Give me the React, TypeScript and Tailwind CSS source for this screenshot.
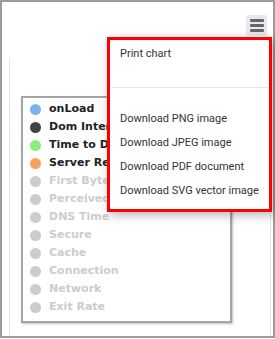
import React from 'react';

const series = [
  { name: 'onLoad', color: 'bg-[#7cb5ec]', on: true },
  { name: 'Dom Interactive', color: 'bg-[#434348]', on: true },
  { name: 'Time to DOM', color: 'bg-[#90ed7d]', on: true },
  { name: 'Server Response', color: 'bg-[#f7a35c]', on: true },
  { name: 'First Byte', color: 'bg-[#cccccc]', on: false },
  { name: 'Perceived', color: 'bg-[#cccccc]', on: false },
  { name: 'DNS Time', color: 'bg-[#cccccc]', on: false },
  { name: 'Secure', color: 'bg-[#cccccc]', on: false },
  { name: 'Cache', color: 'bg-[#cccccc]', on: false },
  { name: 'Connection', color: 'bg-[#cccccc]', on: false },
  { name: 'Network', color: 'bg-[#cccccc]', on: false },
  { name: 'Exit Rate', color: 'bg-[#cccccc]', on: false },
];

const exportItems = ['Download PNG image', 'Download JPEG image', 'Download PDF document', 'Download SVG vector image'];

export default function App() {
  return (
    <div className="relative w-[275px] h-[339px] bg-white overflow-hidden">
      {/* Chart frame */}
      <div className="h-[338px] border-2 border-[#9b9b9b] pt-[56px] pl-[7px] pr-[2px]">
        <div className="h-full border-x border-[#e3e3e3] pt-[38px] pl-[11px]">
          {/* Legend */}
          <div className="w-[211px] h-[227px] border-2 border-[#a5a5a5] shadow-[1px_1px_2px_rgba(0,0,0,0.25)] pt-[2px] pl-[7px] overflow-hidden">
            {series.map((s) => (
              <div key={s.name} className="flex items-center h-[18px] gap-[8px] whitespace-nowrap">
                <span className={`w-[11px] h-[11px] rounded-full shrink-0 ${s.color}`} />
                <span
                  className={`text-[11px] font-bold ${s.on ? 'text-[#222222]' : 'text-[#cccccc]'}`}
                  style={{ fontFamily: '"DejaVu Sans", Verdana, sans-serif' }}
                >
                  {s.name}
                </span>
              </div>
            ))}
          </div>
        </div>
      </div>

      {/* Context button */}
      <div className="absolute left-[246px] top-[15px] w-[21px] h-[21px] bg-[#e6e9f2] rounded-[2px] flex flex-col items-center justify-center gap-[2.5px]">
        <span className="w-[14px] h-[2.5px] bg-[#666666] rounded-[1px]" />
        <span className="w-[14px] h-[2.5px] bg-[#666666] rounded-[1px]" />
        <span className="w-[14px] h-[2.5px] bg-[#666666] rounded-[1px]" />
      </div>

      {/* Export menu */}
      <div
        className="absolute left-[107px] top-[37px] w-[165px] h-[175px] border-[3px] border-[#ff0000] bg-white shadow-[3px_3px_10px_rgba(0,0,0,0.3)] pt-[2px] text-[11px] text-[#333333]"
        style={{ fontFamily: 'Roboto, "Liberation Sans", sans-serif' }}
      >
        <div className="h-6 flex items-center pl-[10px]">Print chart</div>
        <div className="h-[21px]" />
        <div className="h-px bg-[#e6e6e6] mx-[1px]" />
        <div className="h-[19px]" />
        {exportItems.map((item) => (
          <div key={item} className="h-6 flex items-center pl-[10px] whitespace-nowrap">
            {item}
          </div>
        ))}
      </div>
    </div>
  );
}
